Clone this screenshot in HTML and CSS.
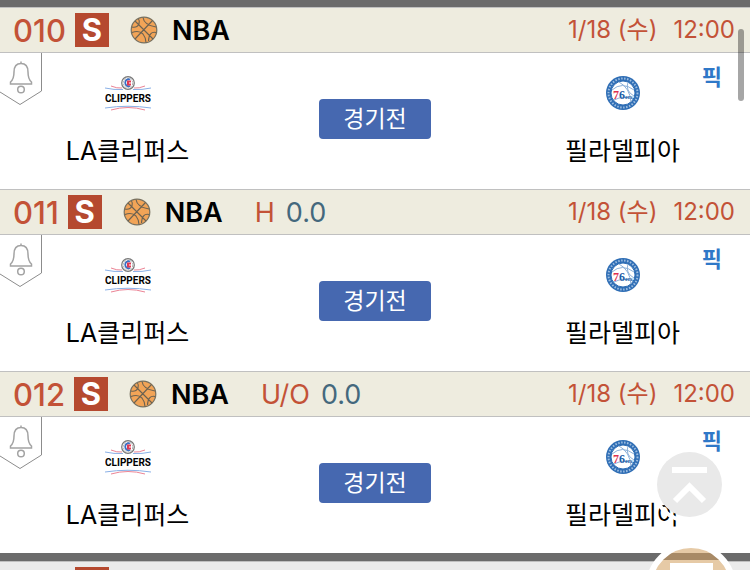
FILE: index.html
```html
<!DOCTYPE html>
<html lang="ko">
<head>
    <meta charset="UTF-8">
    <meta name="viewport" content="width=device-width, initial-scale=1.0">
    <title>NBA</title>
    <link rel="stylesheet" href="styles.css">
</head>
<body>

    <!-- Shared icons -->
    <svg class="sprite" aria-hidden="true">
        <symbol id="ball" viewBox="0 0 28 28">
            <circle cx="14" cy="14" r="12.800" fill="#f2a457" stroke="#77705f" stroke-width="1.200"/>
            <path d="M5 5 23 23M22.500 4.500 5 23M2 11Q7 12 9 8 10 5 8.500 3M13 1.500Q14 9 26 11M2 16.500Q9 14 13 18 15.500 21 16 26.500M26 16.500Q19 15 18.500 25" fill="none" stroke="#6b6252" stroke-width="1.100"/>
        </symbol>
        <symbol id="bell" viewBox="0 0 42 53">
            <path d="M41.500 0V38L20 51.500 0 39" fill="#fff" stroke="#8c8c8c"/>
            <path d="M21 8.500v2M21 10.500C16 10.500 14 14 14 19 14 24 13 27 10.500 29V31H31.500V29C29 27 28 24 28 19 28 14 26 10.500 21 10.500Z" fill="none" stroke="#a3a3a3" stroke-width="1.500"/>
            <circle cx="21" cy="36.500" r="3.300" fill="none" stroke="#a3a3a3" stroke-width="1.500"/>
        </symbol>
        <symbol id="clippers" viewBox="0 0 46 36">
            <circle cx="23" cy="7" r="6.300" fill="#fff" stroke="#777" stroke-width="1.200"/>
            <circle cx="23" cy="7" r="4.800" fill="none" stroke="#aaa" stroke-dasharray="2 1"/>
            <path d="M25 3.500A3.500 3.500 0 1 0 25 10" fill="none" stroke="#3b6fc4" stroke-width="1.800"/>
            <path d="M26 5.500h-3v3h3" fill="none" stroke="#e03a55" stroke-width="2"/>
            <path d="M6 10Q12 12.500 17 12M40 10Q34 12.500 29 12M6 34Q23 29 40 34" fill="none" stroke="#ec8495"/>
            <path d="M0 12Q9 14 18 13.500M46 12Q37 14 28 13.500M0 32Q23 28.500 46 32" fill="none" stroke="#8ab0e6"/>
            <text class="clippers-text" x="23" y="26" text-anchor="middle">CLIPPERS</text>
        </symbol>
        <symbol id="sixers" viewBox="0 0 34 36">
            <circle cx="17" cy="17" r="17" fill="#2f6eb5"/>
            <circle cx="17" cy="17" r="14.500" fill="none" stroke="#9dbde0" stroke-width="2" stroke-dasharray="1.500 1.500"/>
            <circle cx="17" cy="17" r="12" fill="#fff" stroke="#2f6eb5"/>
            <path d="M6 14Q16 5 28 14M13 6Q24 12 25 26M22 6Q19 15 28 20M8 24Q18 19 27 23" fill="none" stroke="#8bb0d8"/>
            <text class="sixers-text" x="7" y="23"><tspan fill="#e0304e">7</tspan><tspan fill="#1f5fa8">6</tspan><tspan class="sixers-small" fill="#1f5fa8">ers</tspan></text>
        </symbol>
    </svg>

    <main class="match-list">
        <!-- 010 -->
        <section class="match">
            <header class="match-header">
                <span class="number">010</span>
                <span class="single">S</span>
                <svg class="ball"><use href="#ball"/></svg>
                <h2 class="league">NBA</h2>
                <p class="schedule"><time>1/18 (수)</time><time>12:00</time></p>
            </header>
            <div class="match-body">
                <button class="alarm" type="button" aria-label="알림"><svg><use href="#bell"/></svg></button>
                <div class="team">
                    <svg class="clippers"><use href="#clippers"/></svg>
                    <p>LA클리퍼스</p>
                </div>
                <button class="status" type="button">경기전</button>
                <div class="team">
                    <svg class="sixers"><use href="#sixers"/></svg>
                    <p>필라델피아</p>
                </div>
                <a class="pick" href="#">픽</a>
            </div>
        </section>

        <!-- 011 -->
        <section class="match">
            <header class="match-header">
                <span class="number">011</span>
                <span class="single">S</span>
                <svg class="ball"><use href="#ball"/></svg>
                <h2 class="league">NBA</h2>
                <span class="type">H</span>
                <span class="line">0.0</span>
                <p class="schedule"><time>1/18 (수)</time><time>12:00</time></p>
            </header>
            <div class="match-body">
                <button class="alarm" type="button" aria-label="알림"><svg><use href="#bell"/></svg></button>
                <div class="team">
                    <svg class="clippers"><use href="#clippers"/></svg>
                    <p>LA클리퍼스</p>
                </div>
                <button class="status" type="button">경기전</button>
                <div class="team">
                    <svg class="sixers"><use href="#sixers"/></svg>
                    <p>필라델피아</p>
                </div>
                <a class="pick" href="#">픽</a>
            </div>
        </section>

        <!-- 012 -->
        <section class="match">
            <header class="match-header">
                <span class="number">012</span>
                <span class="single">S</span>
                <svg class="ball"><use href="#ball"/></svg>
                <h2 class="league">NBA</h2>
                <span class="type">U/O</span>
                <span class="line">0.0</span>
                <p class="schedule"><time>1/18 (수)</time><time>12:00</time></p>
            </header>
            <div class="match-body">
                <button class="alarm" type="button" aria-label="알림"><svg><use href="#bell"/></svg></button>
                <div class="team">
                    <svg class="clippers"><use href="#clippers"/></svg>
                    <p>LA클리퍼스</p>
                </div>
                <button class="status" type="button">경기전</button>
                <div class="team">
                    <svg class="sixers"><use href="#sixers"/></svg>
                    <p>필라델피아</p>
                </div>
                <a class="pick" href="#">픽</a>
            </div>
        </section>
    </main>

    <!-- Next group -->
    <div class="next-group">
        <span class="next-mark"></span>
    </div>

    <!-- Floating controls -->
    <button class="to-top" type="button" aria-label="맨 위로">
        <svg viewBox="0 0 65 65"><path d="M15 18H50M18 49 32.500 34.500 47 49" fill="none" stroke="#fff" stroke-width="6"/></svg>
    </button>
    <button class="slip" type="button" aria-label="슬립"><span></span></button>
    <div class="scroll-thumb"></div>

</body>
</html>
```
FILE: styles.css
```css
* {
    margin: 0;
    padding: 0;
    box-sizing: border-box;
}

body {
    font-family: Inter, "Noto Sans CJK KR", sans-serif;
    background-color: #fff;
    color: #000;
    display: flex;
    flex-direction: column;
    height: 100vh;
    overflow: hidden;
}

button {
    border: none;
    background: none;
    font-family: inherit;
    cursor: pointer;
}

svg {
    display: block;
}

.sprite {
    position: absolute;
    width: 0;
    height: 0;
}

/* Match list */
.match-list {
    flex-shrink: 0;
    border-top: 7px solid #6b6b6b;
    border-bottom: 8px solid #6b6b6b;
}

.match-header {
    display: flex;
    align-items: center;
    height: 46px;
    padding: 0 15px 0 13px;
    background-color: #eeecdf;
    border-top: 1px solid #c0c0c0;
    border-bottom: 1px solid #c0c0c0;
    white-space: nowrap;
}

.number {
    font-size: 31px;
    font-weight: 500;
    color: #c35237;
}

.single {
    width: 34px;
    height: 34px;
    margin-left: 9px;
    background-color: #b5492f;
    color: #fff;
    font-size: 31px;
    font-weight: 700;
    line-height: 34px;
    text-align: center;
}

.ball {
    width: 28px;
    height: 28px;
    margin-left: 21px;
}

.league {
    margin-left: 14px;
    font-size: 27px;
    font-weight: 600;
}

.type {
    margin-left: 32px;
    font-size: 27px;
    color: #c35237;
}

.line {
    margin-left: 11px;
    font-size: 27px;
    color: #44687d;
}

.schedule {
    display: flex;
    align-items: baseline;
    gap: 16px;
    margin-left: auto;
    font-size: 24px;
    line-height: 30px;
    color: #c35237;
}

/* Teams */
.match-body {
    position: relative;
    display: grid;
    grid-template-columns: 1fr 112px 1fr;
    height: 136px;
}

.alarm {
    position: absolute;
    top: 0;
    left: 0;
}

.alarm svg {
    width: 42px;
    height: 53px;
}

.team {
    display: flex;
    flex-direction: column;
    align-items: center;
    padding-top: 23px;
}

.team:first-of-type {
    padding-right: 64px;
}

.team:last-of-type {
    padding-left: 64px;
}

.team p {
    margin-top: 21px;
    font-size: 25px;
    line-height: 36px;
    white-space: nowrap;
}

.clippers {
    width: 46px;
    height: 36px;
}

.clippers-text {
    font: bold 10px Roboto, sans-serif;
}

.sixers {
    width: 34px;
    height: 36px;
}

.sixers-text {
    font: bold 12px "Liberation Serif", serif;
}

.sixers-small {
    font-size: 6px;
}

.status {
    height: 40px;
    margin-top: 46px;
    border-radius: 4px;
    background-color: #4668b0;
    color: #fff;
    font-size: 23px;
    line-height: 40px;
}

.pick {
    position: absolute;
    top: 8px;
    right: 28px;
    color: #2f78c8;
    font-size: 22px;
    font-weight: 700;
    line-height: 32px;
    text-decoration: none;
}

/* Next group */
.next-group {
    flex: 1;
    min-height: 0;
    padding: 5px 0 0 75px;
    border-top: 1px solid #c0c0c0;
    background-color: #ebebeb;
    overflow: hidden;
}

.next-mark {
    display: block;
    width: 34px;
    height: 34px;
    background-color: #b5492f;
}

/* Floating controls */
.to-top {
    position: fixed;
    right: 28px;
    bottom: 53px;
    width: 65px;
    height: 65px;
    border-radius: 50%;
    outline: 4px solid #fff;
    outline-offset: 2px;
    background-color: #e9e9e9;
}

.slip {
    position: fixed;
    right: 14px;
    bottom: -62px;
    display: flex;
    justify-content: center;
    align-items: flex-start;
    width: 90px;
    height: 90px;
    padding-top: 15px;
    border: 6px solid #fff;
    border-radius: 50%;
    background: linear-gradient(#e6caa6 5px, #a88a66 5px, #a88a66 12px, #e6caa6 12px);
}

.slip span {
    width: 43px;
    height: 40px;
    background-color: #fff;
}

.scroll-thumb {
    position: fixed;
    top: 29px;
    right: 6px;
    width: 6px;
    height: 72px;
    border-radius: 3px;
    background-color: rgba(0, 0, 0, 0.35);
}
```
